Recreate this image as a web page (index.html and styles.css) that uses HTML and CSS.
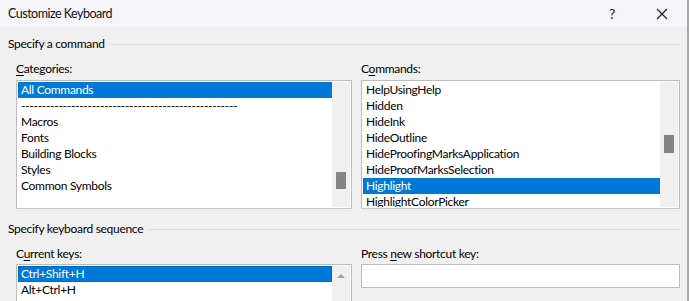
FILE: index.html
```html
<!DOCTYPE html>
<html>
<head>
<meta charset="utf-8">
<link rel="stylesheet" href="styles.css">
</head>
<body>
<div class="window">
  <div class="titlebar">
    <span class="title">Customize Keyboard</span>
    <div class="controls">
      <span class="help">?</span>
      <svg class="close" width="12" height="12" viewBox="0 0 12 12"><path d="M1 1 L11 11 M11 1 L1 11" stroke="#1a1a1a" stroke-width="1.1" fill="none"/></svg>
    </div>
  </div>
  <div class="content">
    <div class="group-head"><span>Specify a command</span><div class="rule"></div></div>
    <div class="cols">
      <div class="col">
        <div class="label"><u>C</u>ategories:</div>
        <div class="listbox list-tall">
          <div class="items">
            <div class="row selected">All Commands</div>
            <div class="row">----------------------------------------------------</div>
            <div class="row">Macros</div>
            <div class="row">Fonts</div>
            <div class="row">Building Blocks</div>
            <div class="row">Styles</div>
            <div class="row">Common Symbols</div>
          </div>
          <div class="vscroll"><div class="thumb thumb-cat"></div></div>
        </div>
      </div>
      <div class="col">
        <div class="label">C<u>o</u>mmands:</div>
        <div class="listbox list-tall">
          <div class="items">
            <div class="row">HelpUsingHelp</div>
            <div class="row">Hidden</div>
            <div class="row">HideInk</div>
            <div class="row">HideOutline</div>
            <div class="row">HideProofingMarksApplication</div>
            <div class="row">HideProofMarksSelection</div>
            <div class="row selected">Highlight</div>
            <div class="row">HighlightColorPicker</div>
          </div>
          <div class="vscroll"><div class="thumb thumb-cmd"></div></div>
        </div>
      </div>
    </div>
    <div class="group-head second"><span>Specify keyboard sequence</span><div class="rule"></div></div>
    <div class="cols">
      <div class="col">
        <div class="label">C<u>u</u>rrent keys:</div>
        <div class="listbox list-keys">
          <div class="items">
            <div class="row selected focus">Ctrl+Shift+H</div>
            <div class="row">Alt+Ctrl+H</div>
          </div>
          <div class="vscroll"><div class="arrow-up"></div></div>
        </div>
      </div>
      <div class="col">
        <div class="label">Press <u>n</u>ew shortcut key:</div>
        <div class="textbox"></div>
      </div>
    </div>
  </div>
</div>
</body>
</html>
```

FILE: styles.css
```css
* { box-sizing: border-box; }
html, body { margin: 0; padding: 0; }
body {
  width: 689px;
  height: 301px;
  overflow: hidden;
  font-family: Lato, "Noto Sans", sans-serif;
  font-size: 12px;
  letter-spacing: -0.3px;
  color: #000;
  background: #f0f0f0;
}
.window {
  width: 689px;
  height: 301px;
  background: #f0f0f0;
  border-right: 2px solid #a8a8a8;
  overflow: hidden;
}
.titlebar {
  height: 27px;
  background: #f6f6fa;
  display: flex;
  align-items: center;
  justify-content: space-between;
  padding-left: 8px;
}
.title {
  font-size: 12.5px;
  letter-spacing: -0.5px;
  color: #111;
}
.controls {
  display: flex;
  align-items: center;
  gap: 41px;
  padding-right: 19px;
}
.help {
  font-size: 14px;
  color: #1a1a1a;
}
.close { display: block; }
.content {
  padding: 9px 7px 0 8px;
}
.group-head {
  display: flex;
  align-items: center;
  height: 16px;
  line-height: 16px;
}
.group-head.second { margin-top: 12px; }
.rule {
  flex: 1;
  height: 1px;
  background: #dcdcdc;
  margin-left: 5px;
}
.cols {
  display: flex;
  gap: 9px;
  padding-left: 8px;
  margin-top: 9px;
}
.col:first-child { width: 336px; }
.col:last-child { width: 319px; }
.label {
  height: 16px;
  line-height: 16px;
}
.label u { text-underline-offset: 2px; }
.listbox {
  margin-top: 3px;
  display: flex;
  background: #fff;
  border: 1px solid #bcbcbc;
  border-bottom-color: #c8c8c8;
  padding: 1px;
  overflow: hidden;
}
.list-tall { height: 129px; }
.list-keys { height: 60px; margin-top: 2px; }
.items {
  flex: 1;
  overflow: hidden;
}
.row {
  height: 16px;
  line-height: 16px;
  padding-left: 3px;
  white-space: nowrap;
  overflow: hidden;
}
.row.selected {
  background: #0078d7;
  color: #fff;
}
.row.focus {
  outline: 1px dotted #5a4a30;
  outline-offset: -1px;
}
.vscroll {
  width: 18px;
  background: #f0f0f0;
  display: flex;
  flex-direction: column;
  align-items: center;
}
.thumb {
  width: 10px;
  background: #868686;
}
.thumb-cat { margin-top: 90px; height: 17px; }
.thumb-cmd { margin-top: 53px; height: 18px; }
.arrow-up {
  margin-top: 8px;
  width: 0;
  height: 0;
  border-left: 4px solid transparent;
  border-right: 4px solid transparent;
  border-bottom: 4px solid #a3a3a3;
}
.textbox {
  margin-top: 2px;
  height: 24px;
  background: #fff;
  border: 1px solid #bcbcbc;
}
```
